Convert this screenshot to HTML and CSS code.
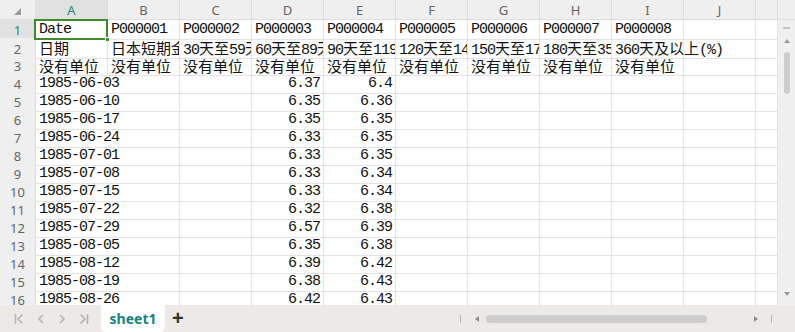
FILE: index.html
```html
<!DOCTYPE html>
<html lang="zh">
<head>
  <meta charset="UTF-8">
  <title>sheet1</title>
  <link rel="stylesheet" href="styles.css">
</head>
<body>

<div class="app">
  <div class="sheet">
    <div class="grid">
      <!-- cabeçalho das colunas -->
      <div class="row head-row">
        <div class="corner"><span class="corner-mark"></span></div>
        <div class="col-head active">A</div>
        <div class="col-head">B</div>
        <div class="col-head">C</div>
        <div class="col-head">D</div>
        <div class="col-head">E</div>
        <div class="col-head">F</div>
        <div class="col-head">G</div>
        <div class="col-head">H</div>
        <div class="col-head">I</div>
        <div class="col-head">J</div>
        <div class="col-head"></div>
      </div>

      <div class="row">
        <div class="row-head active">1</div>
        <div class="cell selected">Date<span class="handle"></span></div>
        <div class="cell">P000001</div>
        <div class="cell">P000002</div>
        <div class="cell">P000003</div>
        <div class="cell">P000004</div>
        <div class="cell">P000005</div>
        <div class="cell">P000006</div>
        <div class="cell">P000007</div>
        <div class="cell">P000008</div>
        <div class="cell"></div>
        <div class="cell"></div>
      </div>

      <div class="row">
        <div class="row-head">2</div>
        <div class="cell">日期</div>
        <div class="cell">日本短期金融市场利率(%)</div>
        <div class="cell">30天至59天(%)</div>
        <div class="cell">60天至89天(%)</div>
        <div class="cell">90天至119天(%)</div>
        <div class="cell">120天至149天(%)</div>
        <div class="cell">150天至179天(%)</div>
        <div class="cell">180天至359天(%)</div>
        <div class="cell spill">360天及以上(%)</div>
        <div class="cell"></div>
        <div class="cell"></div>
      </div>

      <div class="row">
        <div class="row-head">3</div>
        <div class="cell">没有单位</div>
        <div class="cell">没有单位</div>
        <div class="cell">没有单位</div>
        <div class="cell">没有单位</div>
        <div class="cell">没有单位</div>
        <div class="cell">没有单位</div>
        <div class="cell">没有单位</div>
        <div class="cell">没有单位</div>
        <div class="cell">没有单位</div>
        <div class="cell"></div>
        <div class="cell"></div>
      </div>
    </div>

    <div class="vscroll">
      <div class="vscroll-top"></div>
      <div class="vscroll-line"></div>
      <div class="arrow-up"></div>
      <div class="vthumb"></div>
      <div class="vscroll-fill"></div>
      <div class="arrow-down"></div>
    </div>
  </div>

  <div class="tabbar">
    <div class="nav">
      <svg width="10" height="12" viewBox="0 0 10 12"><path d="M1.5 1v10M8.5 1.5L4 6l4.5 4.5" fill="none" stroke="#b3b3b3" stroke-width="1.6"/></svg>
      <svg width="8" height="12" viewBox="0 0 8 12"><path d="M6 2L2 6l4 4" fill="none" stroke="#b3b3b3" stroke-width="1.6"/></svg>
      <svg width="8" height="12" viewBox="0 0 8 12"><path d="M2 2l4 4-4 4" fill="none" stroke="#b3b3b3" stroke-width="1.6"/></svg>
      <svg width="10" height="12" viewBox="0 0 10 12"><path d="M1.5 1.5L6 6l-4.5 4.5M8.5 1v10" fill="none" stroke="#b3b3b3" stroke-width="1.6"/></svg>
    </div>
    <div class="tab">sheet1</div>
    <div class="add">+</div>
    <div class="hscroll">
      <span class="bar"></span>
      <span class="arrow-left"></span>
      <span class="hthumb"></span>
      <span class="arrow-right"></span>
      <span class="bar"></span>
    </div>
  </div>
</div>

<script>
  const rows = [
    ["1985-06-03", "6.37", "6.4"],
    ["1985-06-10", "6.35", "6.36"],
    ["1985-06-17", "6.35", "6.35"],
    ["1985-06-24", "6.33", "6.35"],
    ["1985-07-01", "6.33", "6.35"],
    ["1985-07-08", "6.33", "6.34"],
    ["1985-07-15", "6.33", "6.34"],
    ["1985-07-22", "6.32", "6.38"],
    ["1985-07-29", "6.57", "6.39"],
    ["1985-08-05", "6.35", "6.38"],
    ["1985-08-12", "6.39", "6.42"],
    ["1985-08-19", "6.38", "6.43"],
    ["1985-08-26", "6.42", "6.43"]
  ];

  const grid = document.querySelector('.grid');

  rows.forEach((r, i) => {
    const row = document.createElement('div');
    row.className = 'row';
    let html = `<div class="row-head">${i + 4}</div>`;
    html += `<div class="cell spill date">${r[0]}</div>`; // data invade a coluna B vazia
    html += `<div class="cell"></div><div class="cell"></div>`;
    html += `<div class="cell num">${r[1]}</div>`;
    html += `<div class="cell num">${r[2]}</div>`;
    for (let c = 0; c < 6; c++) html += `<div class="cell"></div>`;
    row.innerHTML = html;
    grid.appendChild(row);
  });

  // caracteres chineses ocupam largura cheia, o resto meia largura
  document.querySelectorAll('.cell').forEach(cell => {
    cell.innerHTML = cell.innerHTML.replace(/([\u4e00-\u9fff]+)/g, '<span class="cjk">$1</span>');
  });
</script>

</body>
</html>
```

FILE: styles.css
```css
* {
  margin: 0;
  padding: 0;
  box-sizing: border-box;
}

html, body {
  height: 100%;
  background: #fff;
  overflow: hidden;
}

.app {
  display: flex;
  flex-direction: column;
  height: 332px;
  width: 795px;
}

.sheet {
  display: flex;
  height: 305px;
  overflow: hidden;
}

.grid {
  flex: 1;
  overflow: hidden;
}

.row {
  display: grid;
  grid-template-columns: 36px repeat(10, 72px) 1fr;
  height: 18px;
}

.head-row {
  height: 20px;
}

/* cabeçalhos */
.corner,
.col-head,
.row-head {
  background: #efefef;
  border-right: 1px solid #dcdcdc;
  border-bottom: 1px solid #dcdcdc;
  color: #666;
  font-family: "Noto Sans", "Liberation Sans", sans-serif;
  font-size: 13px;
  display: flex;
  align-items: center;
  justify-content: center;
}

.corner {
  position: relative;
}

.corner-mark {
  position: absolute;
  left: 14px;
  top: 8px;
  width: 0;
  height: 0;
  border-left: 7px solid transparent;
  border-bottom: 7px solid #9a9a9a;
}

.col-head.active,
.row-head.active {
  background: #e1e1e1;
  color: #1b8a80;
}

.row-head {
  font-size: 13px;
  padding-top: 1px;
}

/* células */
.cell {
  border-right: 1px solid #e3e3e3;
  border-bottom: 1px solid #e3e3e3;
  font-family: "Liberation Mono", "Noto Sans CJK SC", monospace;
  font-size: 15px;
  letter-spacing: -1px;
  line-height: 15px;
  color: #111;
  padding: 2px 3px 0 3px;
  white-space: nowrap;
  overflow: hidden;
  position: relative;
}

.cjk {
  font-family: "Noto Sans CJK SC", sans-serif;
  font-size: 15px;
  letter-spacing: 0;
}

.cell.num {
  text-align: right;
}

.cell.spill {
  overflow: visible;
  z-index: 1;
}

.cell.date {
  border-right-color: transparent;
}

.cell.selected {
  overflow: visible;
  z-index: 2;
}

.cell.selected::before {
  content: "";
  position: absolute;
  left: -2px;
  top: -1px;
  right: -1px;
  bottom: -1px;
  border: 2px solid #3f8a2c;
}

.handle {
  position: absolute;
  right: -3px;
  bottom: -3px;
  width: 5px;
  height: 5px;
  background: #3f8a2c;
  border: 1px solid #fff;
}

/* barra de rolagem vertical */
.vscroll {
  width: 17px;
  background: #f0f0f0;
  display: flex;
  flex-direction: column;
  align-items: center;
}

.vscroll-top {
  height: 20px;
  width: 100%;
  background: #efefef;
  border-bottom: 1px solid #dcdcdc;
}

.vscroll-line {
  width: 7px;
  height: 2px;
  background: #c4c4c4;
  margin-top: 7px;
}

.arrow-up {
  margin-top: 10px;
  border-left: 3px solid transparent;
  border-right: 3px solid transparent;
  border-bottom: 4px solid #9a9a9a;
}

.vthumb {
  margin-top: 9px;
  width: 6px;
  height: 42px;
  border-radius: 3px;
  background: #cdcdcd;
}

.vscroll-fill {
  flex: 1;
}

.arrow-down {
  margin-bottom: 9px;
  border-left: 3px solid transparent;
  border-right: 3px solid transparent;
  border-top: 4px solid #9a9a9a;
}

/* abas */
.tabbar {
  height: 27px;
  background: #ede9e7;
  display: flex;
  align-items: stretch;
}

.nav {
  display: flex;
  align-items: center;
  gap: 13px;
  padding-left: 14px;
  width: 101px;
}

.tab {
  width: 64px;
  background: #fff;
  border-radius: 0 0 5px 5px;
  color: #16837f;
  font-family: "Noto Sans", "Liberation Sans", sans-serif;
  font-weight: bold;
  font-size: 14px;
  display: flex;
  align-items: center;
  justify-content: center;
  padding-bottom: 1px;
}

.add {
  font-family: "Liberation Sans", sans-serif;
  font-size: 20px;
  font-weight: bold;
  color: #333;
  padding-left: 7px;
  display: flex;
  align-items: center;
  width: 295px;
}

.hscroll {
  display: flex;
  align-items: center;
  width: 335px;
}

.hscroll .bar {
  width: 1px;
  height: 8px;
  background: #b3b3b3;
}

.arrow-left {
  margin-left: 14px;
  border-top: 3px solid transparent;
  border-bottom: 3px solid transparent;
  border-right: 4px solid #8a8a8a;
}

.hthumb {
  margin-left: 7px;
  width: 221px;
  height: 8px;
  border-radius: 4px;
  background: #cdcdcd;
}

.arrow-right {
  margin-left: 47px;
  margin-right: 13px;
  border-top: 3px solid transparent;
  border-bottom: 3px solid transparent;
  border-left: 4px solid #8a8a8a;
}
```
